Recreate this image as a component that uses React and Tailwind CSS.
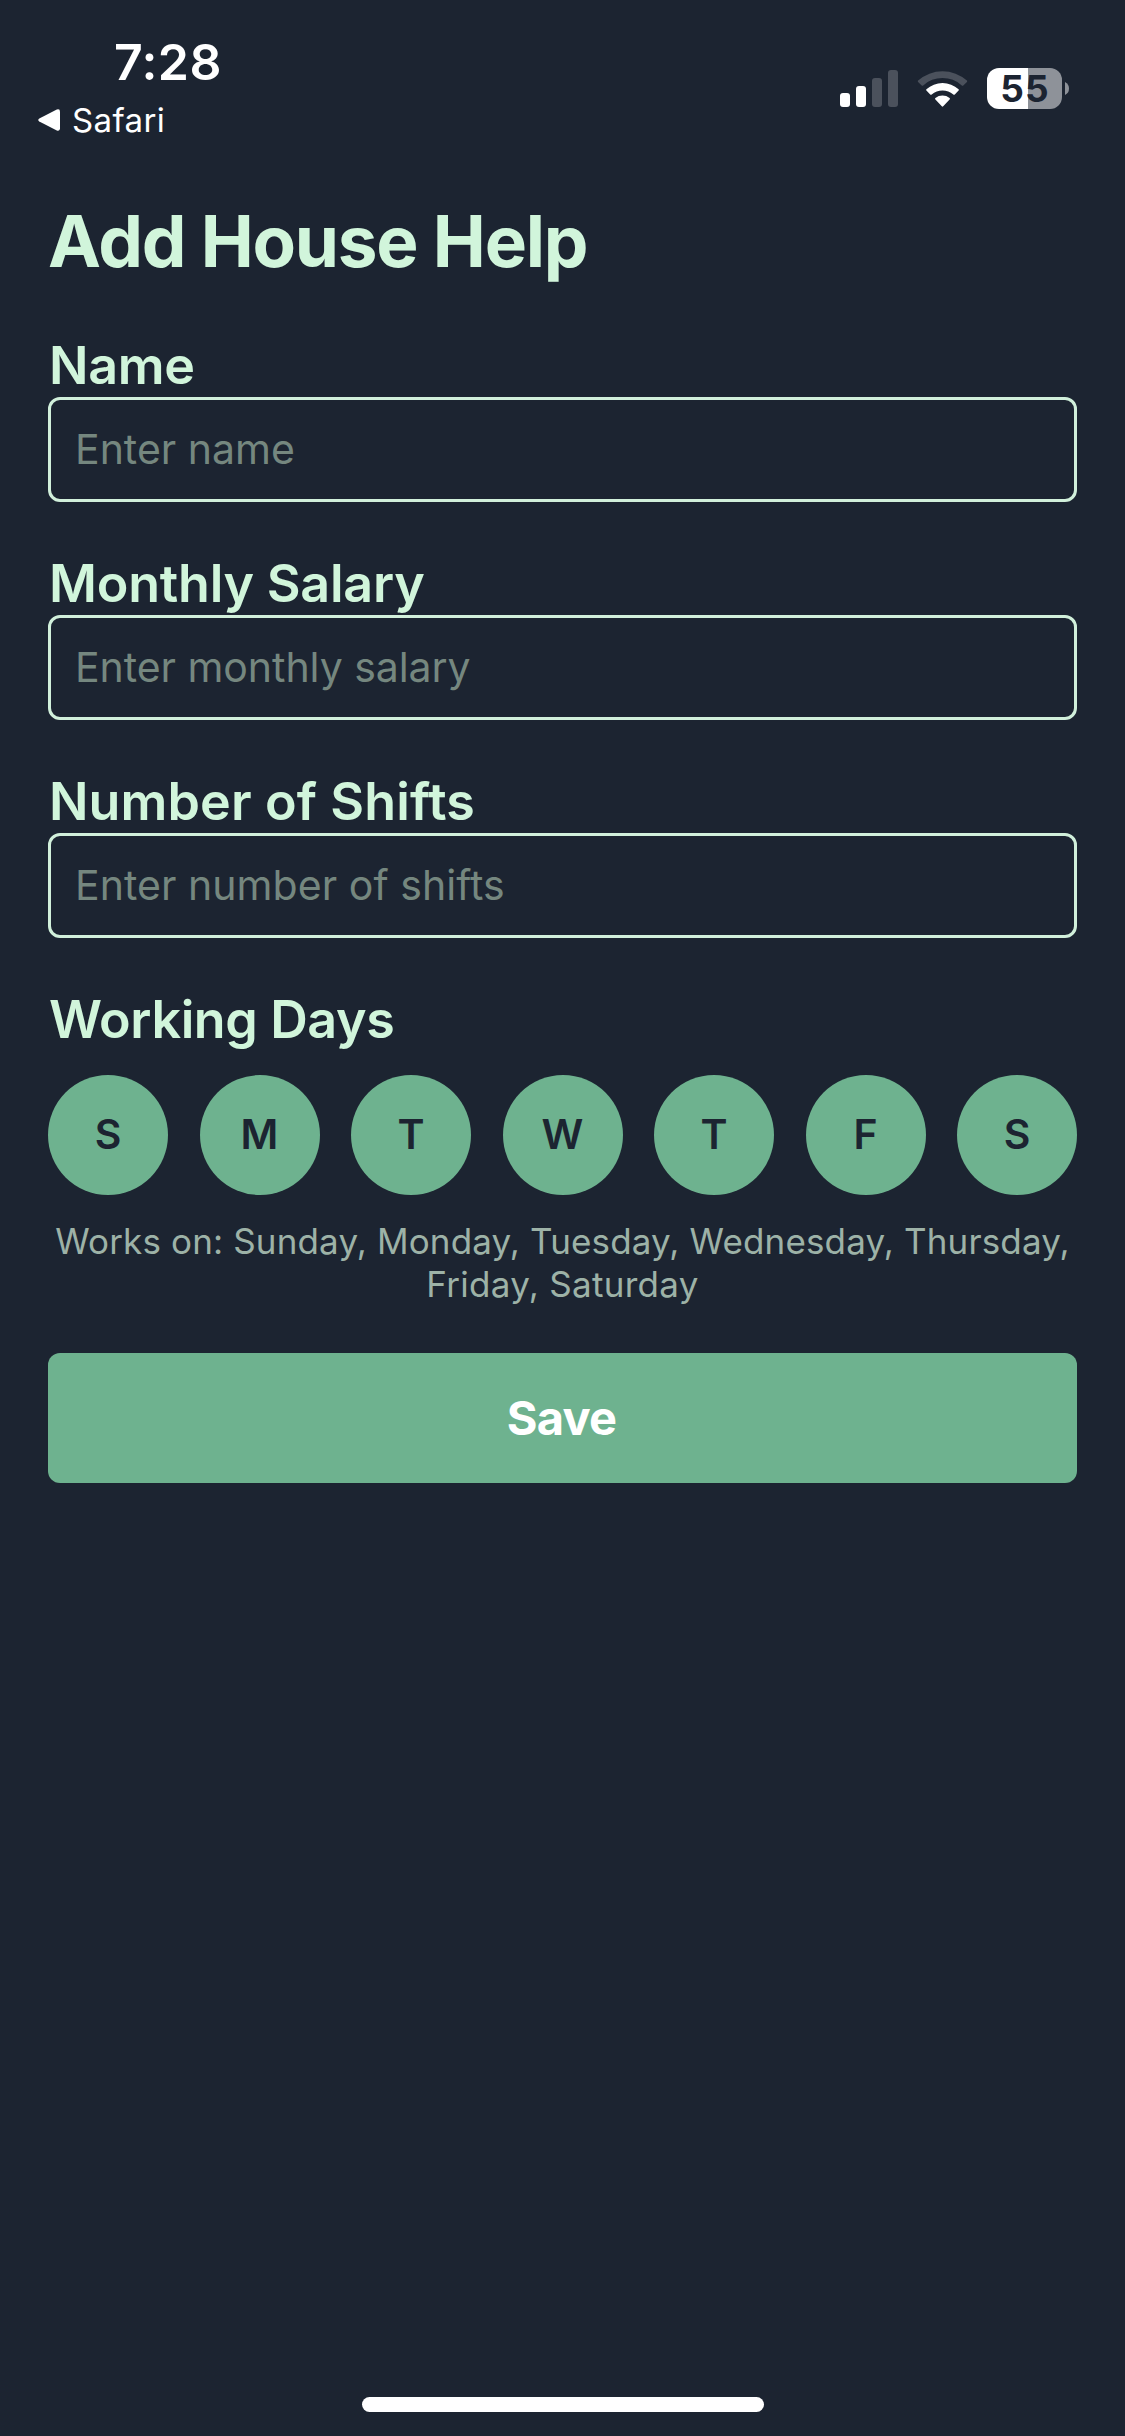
import React from "react";

const FIELDS = [
  { label: "Name", labelClass: "tracking-[-0.3px]", placeholder: "Enter name", inputClass: "tracking-[0px]" },
  { label: "Monthly Salary", labelClass: "tracking-[-0.22px]", placeholder: "Enter monthly salary", inputClass: "tracking-[-0.05px]" },
  { label: "Number of Shifts", labelClass: "tracking-[0.12px]", placeholder: "Enter number of shifts", inputClass: "tracking-[0.05px]" },
];

const DAYS = ["S", "M", "T", "W", "T", "F", "S"];

function SignalIcon() {
  return (
    <svg className="mt-[70px] h-[37px] w-[58px]" viewBox="0 0 58 37" fill="#fff">
      <rect x="0" y="23" width="10" height="14" rx="3" />
      <rect x="16" y="16" width="10" height="21" rx="3" />
      <rect x="32" y="8" width="10" height="29" rx="3" fill="#4b515c" />
      <rect x="48" y="0" width="10" height="37" rx="3" fill="#4b515c" />
    </svg>
  );
}

function WifiIcon() {
  return (
    <svg className="ml-[19px] mt-[70px] h-[38px] w-[51px]" viewBox="0 0 51 38" fill="#fff">
      <path
        d="M1.1 10.6A36.6 36.6 0 0 1 49.9 10.6Q50.5 11.3 49.9 12L46.3 15.4Q45.5 16 44.8 15.4A28.6 28.6 0 0 0 6.2 15.4Q5.5 16 4.7 15.4L1.1 12Q0.5 11.3 1.1 10.6Z"
        fill="#4b515c"
      />
      <path d="M9.4 19.3A24 24 0 0 1 41.6 19.3Q42.2 20 41.6 20.6L37.8 24.4Q37 25 36.3 24.4A16.6 16.6 0 0 0 14.7 24.4Q14 25 13.2 24.4L9.4 20.6Q8.8 20 9.4 19.3Z" />
      <path d="M18.4 28A11.6 11.6 0 0 1 32.6 28Q33.4 28.8 32.6 29.6L26.2 36.3Q25.5 37 24.8 36.3L18.4 29.6Q17.6 28.8 18.4 28Z" />
    </svg>
  );
}

function Battery() {
  return (
    <div className="ml-[19px] mt-[68px] flex h-[41px] items-center">
      <div className="flex h-[41px] w-[75px] items-center justify-center rounded-[12px] bg-linear-to-r from-white from-[41px] to-[#8e9299] to-[41px]">
        <span className="pt-px pl-px text-[37px] leading-10 font-bold tracking-[1px] text-[#1c2431]">55</span>
      </div>
      <svg className="ml-[3px] h-[13px] w-1" viewBox="0 0 4 13">
        <path d="M0 0Q4 2 4 6.5T0 13Z" fill="#8e9299" />
      </svg>
    </div>
  );
}

function StatusBar() {
  return (
    <header className="flex h-[141px] justify-between pl-[38px] pr-14 text-white">
      <div className="flex flex-col items-start">
        <div className="mt-8 pl-[76px] text-[50px] leading-[60px] font-semibold tracking-[0.4px]">7:28</div>
        <div className="mt-2 flex items-center leading-10">
          <svg className="h-[22px] w-[22px]" viewBox="0 0 22 22" fill="#fff">
            <path d="M1.3 9.4L18.8 0.6Q22 -0.5 22 2.8V19.2Q22 22.5 18.8 21.4L1.3 12.6Q-0.8 11 1.3 9.4Z" />
          </svg>
          <span className="ml-3 text-[33px] tracking-[0.4px]">Safari</span>
        </div>
      </div>
      <div className="flex items-start">
        <SignalIcon />
        <WifiIcon />
        <Battery />
      </div>
    </header>
  );
}

export default function App() {
  return (
    <div className="flex h-[2436px] w-[1125px] flex-col bg-[#1c2431] font-['Inter',sans-serif] text-[#d1f5db]">
      <StatusBar />
      <main className="flex flex-1 flex-col px-12 pt-[57px]">
        <h1 className="text-[71px] leading-[86px] font-bold tracking-[-1.25px]">Add House Help</h1>
        <form className="mt-[49px] flex flex-col">
          {FIELDS.map((f) => (
            <label key={f.label} className="mb-[49px] flex flex-col">
              <span className={`pt-px pl-px text-[52px] leading-[63px] font-semibold ${f.labelClass}`}>{f.label}</span>
              <input
                type="text"
                placeholder={f.placeholder}
                className={`h-[105px] rounded-[12px] border-3 border-[#d1f0db] px-6 pb-px text-[41px] placeholder:text-[#75877f] ${f.inputClass}`}
              />
            </label>
          ))}
          <h2 className="pt-px pl-px text-[52px] leading-[63px] font-semibold tracking-[-0.38px]">Working Days</h2>
          <div className="mt-6 flex justify-between">
            {DAYS.map((d, i) => (
              <button
                key={i}
                type="button"
                className="flex size-[120px] items-center justify-center rounded-full bg-[#6eb28f] text-[41px] font-semibold text-[#1c2431]"
              >
                {d}
              </button>
            ))}
          </div>
          <p className="mt-[25px] text-center text-[35px] leading-[43px] text-[#9db2a7]">
            <span className="block whitespace-nowrap tracking-[0.15px]">Works on: Sunday, Monday, Tuesday, Wednesday, Thursday,</span>
            <span className="block tracking-[0.3px]">Friday, Saturday</span>
          </p>
          <button type="button" className="mt-[47px] h-[130px] rounded-[12px] bg-[#6eb28f] pr-0.5 text-[47px] font-bold tracking-[-0.8px] text-white">
            Save
          </button>
        </form>
      </main>
      <div className="mb-6 h-[15px] w-[402px] self-center rounded-full bg-white" />
    </div>
  );
}
